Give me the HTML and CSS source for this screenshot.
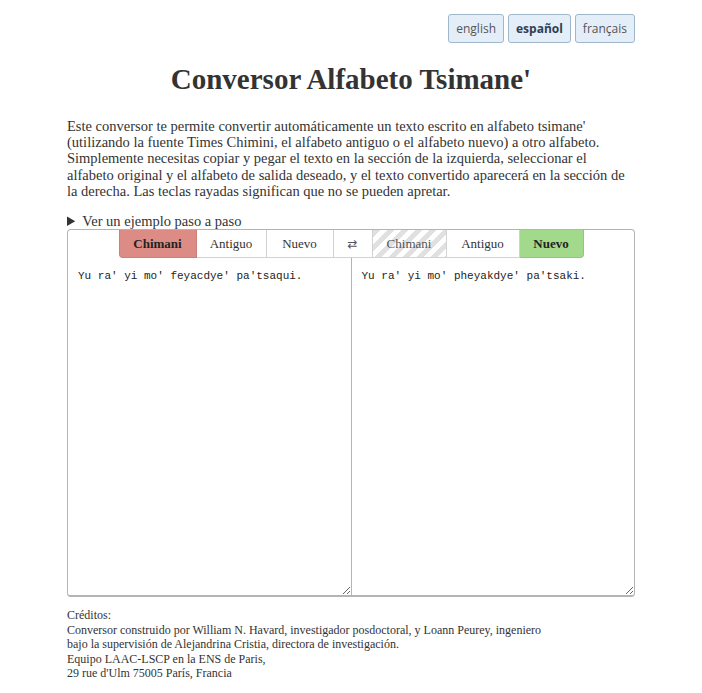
FILE: index.html
```html
<!DOCTYPE html>
<html lang="es">
<head>
<meta charset="utf-8">
<title>Conversor Alfabeto Tsimane'</title>
<link rel="stylesheet" href="styles.css">
</head>
<body>
<div class="page">
  <div class="langs">
    <button class="lang">english</button>
    <button class="lang active">español</button>
    <button class="lang">français</button>
  </div>
  <h1 class="title">Conversor Alfabeto Tsimane'</h1>
  <p class="intro">Este conversor te permite convertir automáticamente un texto escrito en alfabeto tsimane' (utilizando la fuente Times Chimini, el alfabeto antiguo o el alfabeto nuevo) a otro alfabeto. Simplemente necesitas copiar y pegar el texto en la sección de la izquierda, seleccionar el alfabeto original y el alfabeto de salida deseado, y el texto convertido aparecerá en la sección de la derecha. Las teclas rayadas significan que no se pueden apretar.</p>
  <details class="example"><summary>Ver un ejemplo paso a paso</summary></details>
  <div class="converter">
    <div class="toolbar">
      <button class="key key-first src-on">Chimani</button>
      <button class="key">Antiguo</button>
      <button class="key">Nuevo</button>
      <button class="key swap">&#8644;</button>
      <button class="key striped">Chimani</button>
      <button class="key">Antiguo</button>
      <button class="key key-last dst-on">Nuevo</button>
    </div>
    <div class="panes">
      <textarea class="pane pane-left" spellcheck="false">Yu ra' yi mo' feyacdye' pa'tsaqui.</textarea>
      <textarea class="pane pane-right" spellcheck="false">Yu ra' yi mo' pheyakdye' pa'tsaki.</textarea>
    </div>
  </div>
  <div class="credits">
    Créditos:<br>
    Conversor construido por William N. Havard, investigador posdoctoral, y Loann Peurey, ingeniero<br>
    bajo la supervisión de Alejandrina Cristia, directora de investigación.<br>
    Equipo LAAC-LSCP en la ENS de Paris,<br>
    29 rue d'Ulm 75005 París, Francia
  </div>
</div>
</body>
</html>
```
FILE: styles.css
```css
html, body {
  margin: 0;
  padding: 0;
  background: #fff;
}
body {
  font-family: "Liberation Serif", "Times New Roman", serif;
  color: #333;
}
.page {
  width: 568px;
  margin: 0 auto;
  padding-top: 14px;
}
.langs {
  display: flex;
  justify-content: flex-end;
  gap: 4px;
}
.lang {
  height: 29px;
  padding: 0 7px;
  font-family: "Open Sans", "Noto Sans", sans-serif;
  font-size: 12px;
  color: #555;
  background: #e4eef8;
  border: 1px solid #9fb6cb;
  border-radius: 3px;
}
.lang.active {
  font-weight: bold;
  color: #2f4050;
}
.title {
  margin: 18px 0 0;
  text-align: center;
  font-size: 29px;
  font-weight: bold;
  line-height: 36px;
  color: #333;
}
.intro {
  margin: 21px 0 0;
  font-size: 14.5px;
  line-height: 16.2px;
}
.example {
  margin-top: 14px;
  font-size: 14.5px;
  line-height: 16px;
}
.example summary {
  cursor: pointer;
}
.converter {
  border: 1px solid #b4b4b4;
  border-bottom-width: 2px;
  border-radius: 4px;
  overflow: hidden;
  display: flex;
  flex-direction: column;
}
.toolbar {
  display: flex;
  justify-content: center;
}
.key {
  height: 28px;
  padding: 0;
  margin: 0;
  font-family: "Liberation Serif", "Times New Roman", serif;
  font-size: 13px;
  color: #333;
  background: #fff;
  border: 1px solid #d2d2d2;
  border-top: none;
  border-left: none;
  border-radius: 0;
}
.key-first {
  border-left: 1px solid #d2d2d2;
  border-bottom-left-radius: 4px;
}
.key-last {
  border-bottom-right-radius: 4px;
}
.key:nth-child(1) { width: 78px; }
.key:nth-child(2) { width: 70px; }
.key:nth-child(3) { width: 67px; }
.key:nth-child(4) { width: 39px; }
.key:nth-child(5) { width: 74px; }
.key:nth-child(6) { width: 73px; }
.key:nth-child(7) { width: 64px; }
.src-on {
  background: #dd8c85;
  border-color: #c9807a;
  font-weight: bold;
  color: #222;
}
.dst-on {
  background: #a3d98b;
  border-color: #93c67d;
  font-weight: bold;
  color: #222;
}
.swap {
  font-family: "DejaVu Sans", sans-serif;
  font-size: 12px;
  color: #555;
}
.striped {
  color: #555;
  background: repeating-linear-gradient(135deg, #e0e0e0 0 5px, #fff 5px 10px);
}
.panes {
  display: flex;
  height: 337px;
}
.pane {
  flex: 1 1 0;
  min-width: 0;
  margin: 0;
  padding: 11px 10px;
  border: none;
  outline: none;
  font-family: "Liberation Mono", "DejaVu Sans Mono", monospace;
  font-size: 11px;
  line-height: 15px;
  color: #222;
  resize: both;
  box-sizing: border-box;
}
.pane-left {
  border-right: 1px solid #b4b4b4;
}
.credits {
  margin-top: 11px;
  font-size: 12px;
  line-height: 14.5px;
  color: #333;
}
```
